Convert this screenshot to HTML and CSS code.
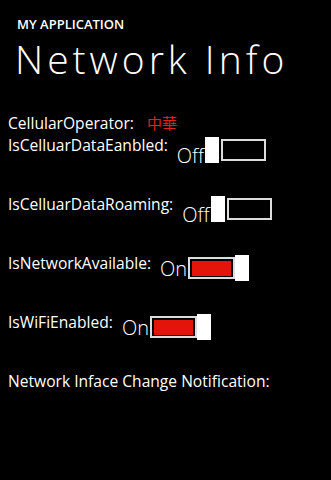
FILE: index.html
```html
<!DOCTYPE html>
<html>
<head>
<meta charset="utf-8">
<link rel="stylesheet" href="styles.css">
</head>
<body>
<div class="page">
  <header class="titles">
    <div class="app-title">MY APPLICATION</div>
    <div class="page-title">Network Info</div>
  </header>
  <main class="content">
    <div class="row op-row">
      <span class="label">CellularOperator:</span>
      <span class="operator">中華</span>
    </div>
    <div class="row toggle-row first">
      <span class="label">IsCelluarDataEanbled:</span>
      <span class="toggle">
        <span class="state">Off</span>
        <span class="switch off"><span class="thumb"></span><span class="track"><span class="fill"></span></span></span>
      </span>
    </div>
    <div class="row toggle-row">
      <span class="label">IsCelluarDataRoaming:</span>
      <span class="toggle">
        <span class="state">Off</span>
        <span class="switch off"><span class="thumb"></span><span class="track"><span class="fill"></span></span></span>
      </span>
    </div>
    <div class="row toggle-row">
      <span class="label">IsNetworkAvailable:</span>
      <span class="toggle">
        <span class="state">On</span>
        <span class="switch on"><span class="track"><span class="fill"></span></span><span class="thumb"></span></span>
      </span>
    </div>
    <div class="row toggle-row">
      <span class="label">IsWiFiEnabled:</span>
      <span class="toggle">
        <span class="state">On</span>
        <span class="switch on"><span class="track"><span class="fill"></span></span><span class="thumb"></span></span>
      </span>
    </div>
    <div class="row note-row">
      <span class="label">Network Inface Change Notification:</span>
    </div>
  </main>
</div>
</body>
</html>
```

FILE: styles.css
```css
html, body {
  margin: 0;
  padding: 0;
  background: #000;
}
body {
  width: 331px;
  height: 480px;
  overflow: hidden;
  color: #fff;
  font-family: "Open Sans", "Noto Sans", sans-serif;
}
.titles {
  padding: 16px 0 0 17px;
}
.app-title {
  font-size: 13px;
  line-height: 17px;
  font-weight: 600;
}
.page-title {
  font-size: 39px;
  line-height: 44px;
  font-weight: 300;
  letter-spacing: 4px;
  margin: 4px 0 0 -2px;
}
.content {
  padding: 0 0 0 8px;
  margin-top: 31px;
}
.row {
  display: flex;
  align-items: flex-start;
}
.label {
  font-size: 15.6px;
  line-height: 22px;
  white-space: nowrap;
}
.operator {
  font-family: "Noto Sans CJK TC", sans-serif;
  color: #e0231c;
  font-size: 15px;
  line-height: 22px;
  margin-left: 13px;
}
.toggle-row {
  height: 59px;
}
.toggle {
  display: flex;
  align-items: baseline;
  margin: 3px 0 0 9px;
}
.state {
  font-size: 20px;
  line-height: 25px;
  font-weight: 300;
  margin-right: 1px;
}
.switch {
  display: flex;
  align-items: center;
  height: 26px;
}
.switch.off {
  gap: 2px;
}
.thumb {
  width: 14px;
  height: 26px;
  background: #fff;
}
.track {
  box-sizing: border-box;
  width: 47px;
  height: 22px;
  border: 2px solid #dcdcdc;
  padding: 2px 2px 1px 2px;
  display: flex;
}
.switch.off .track {
  width: 45px;
}
.fill {
  flex: 1;
}
.switch.on .fill {
  background: #e31409;
}
```
